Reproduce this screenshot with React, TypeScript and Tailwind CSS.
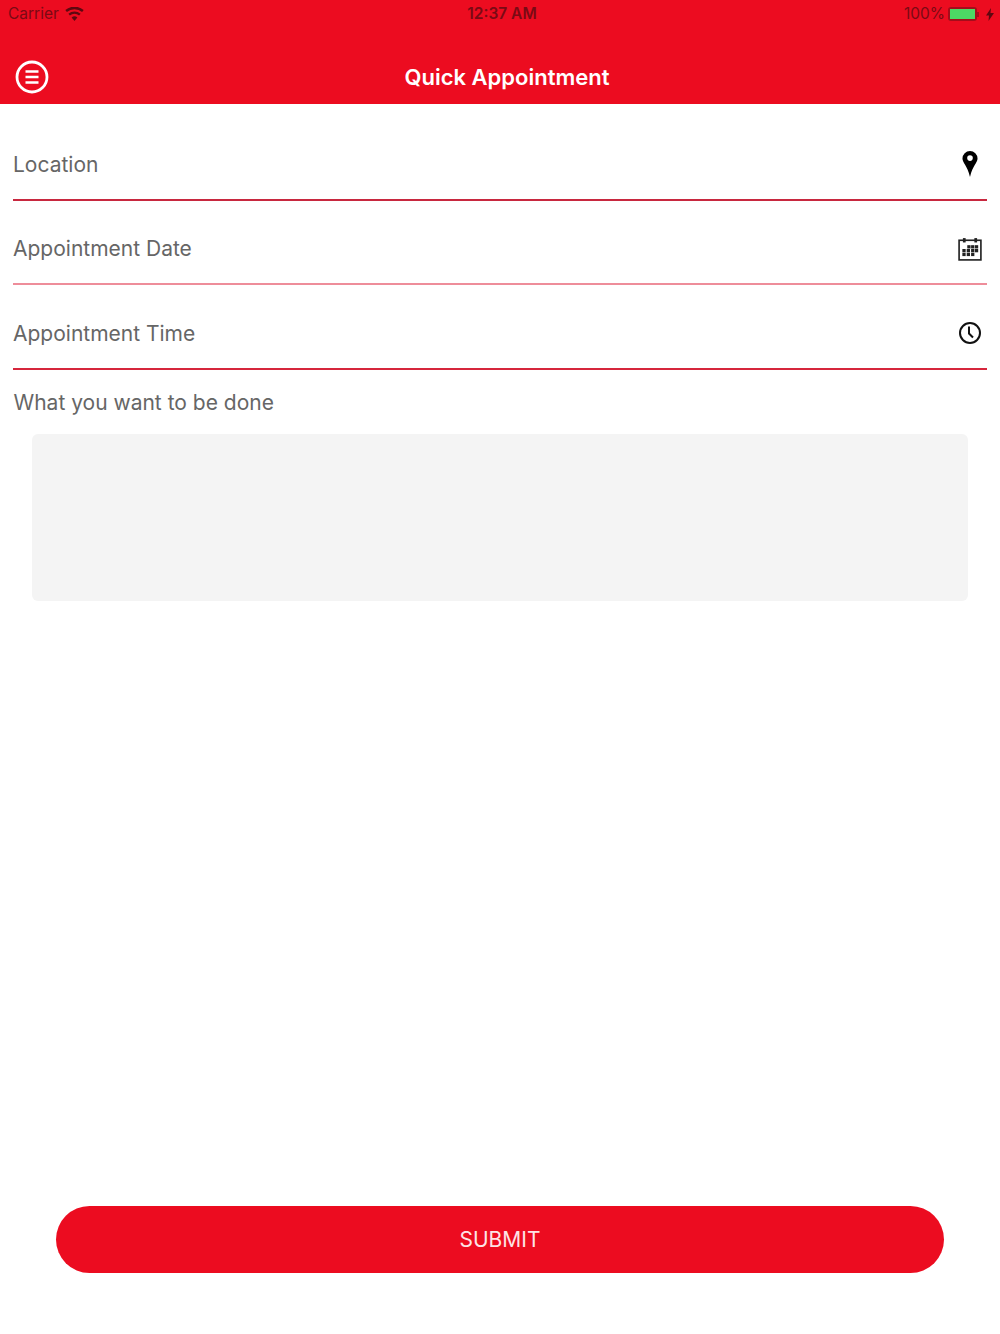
import React from 'react';

const fontStack = { fontFamily: 'Inter, "Liberation Sans", sans-serif' };

const PinIcon = () => (
  <svg width="18" height="28" viewBox="0 0 16 26">
    <path d="M8 1a7 7 0 0 0-7 7c0 4 4.500 6.500 7 17 2.500-10.500 7-13 7-17a7 7 0 0 0-7-7z" fill="#000" />
    <circle cx="8" cy="7.500" r="2.600" fill="#fff" />
  </svg>
);

const CalendarIcon = () => (
  <svg width="24" height="24" viewBox="0 0 22 22">
    <rect x="1" y="3" width="20" height="18" fill="none" stroke="#222" strokeWidth="1.500" />
    <rect x="4.500" y="1" width="2.500" height="4" fill="#222" />
    <rect x="15" y="1" width="2.500" height="4" fill="#222" />
    {[[8.500, 7.500], [12, 7.500], [15.500, 7.500], [4, 11], [8, 11], [12, 11], [15.500, 11], [4, 14.500], [8, 14.500], [12, 14.500]].map(([x, y]) => (
      <rect key={`${x}-${y}`} x={x} y={y} width="3" height="3" fill="#222" />
    ))}
  </svg>
);

const ClockIcon = () => (
  <svg width="24" height="24" viewBox="0 0 24 24" fill="none" stroke="#111" strokeWidth="2">
    <circle cx="12" cy="12" r="10" />
    <path d="M11 5.500v7l4 4" />
  </svg>
);

const Field = ({ label, icon, line }: { label: string; icon: React.ReactNode; line: string }) => (
  <div className={`mx-[13px] h-[84.500px] flex items-center justify-between border-b-2 pt-[14px] ${line}`}>
    <span className="text-[21px] text-[#666]">{label}</span>
    <span className="w-[34px] flex justify-center">{icon}</span>
  </div>
);

export default function App() {
  return (
    <div className="w-[1000px] h-[1334px] bg-white flex flex-col" style={fontStack}>
      <header className="h-[104px] bg-[#ec0c20] flex flex-col">
        <div className="h-[28px] pl-2 pr-[6px] grid grid-cols-3 items-center text-[15.500px] text-[#7a0a14]">
          <div className="flex items-center gap-[6px]">
            <span>Carrier</span>
            <svg width="19" height="14" viewBox="0 0 19 14" fill="#5e0810">
              <path d="M9.500 14 6.600 10.500a4.500 4.500 0 0 1 5.800 0z" />
              <path d="M4.900 8.500a7 7 0 0 1 9.200 0l1.500-1.800a9.500 9.500 0 0 0-12.200 0z" />
              <path d="M1.900 5a11.500 11.500 0 0 1 15.200 0l1.600-1.900a14 14 0 0 0-18.400 0z" />
            </svg>
          </div>
          <div className="text-center font-semibold pl-[2px]">12:37 AM</div>
          <div className="flex items-center justify-end">
            <span>100%</span>
            <span className="flex items-center ml-[3px]">
              <span className="w-[29px] h-[14px] border-2 border-[#a50d1b] rounded-[3px] flex">
                <span className="flex-1 bg-[#4cd964]" />
              </span>
              <span className="w-[2px] h-[5px] bg-[#a50d1b]" />
            </span>
            <svg className="ml-[7px]" width="8" height="13" viewBox="0 0 8 13" fill="#5e0810">
              <path d="M5 0 0 7.500h3L2.500 13 8 5H4.500z" />
            </svg>
          </div>
        </div>
        <div className="flex-1 relative flex items-center justify-center pl-[14px] pt-[22px]">
          <svg className="absolute left-[15px] top-[32px]" width="34" height="34" viewBox="0 0 34 34" fill="none" stroke="#fff">
            <circle cx="17" cy="17" r="15" strokeWidth="2.800" />
            <path d="M10.500 11.500h13M10.500 17h13M10.500 22.500h13" strokeWidth="2.400" />
          </svg>
          <h1 className="text-[22px] font-semibold text-white">Quick Appointment</h1>
        </div>
      </header>

      <div className="pt-[12px] flex flex-col">
        <Field label="Location" icon={<PinIcon />} line="border-[#c8283f]" />
        <Field label="Appointment Date" icon={<CalendarIcon />} line="border-[#ee8d9a]" />
        <Field label="Appointment Time" icon={<ClockIcon />} line="border-[#d6263c]" />
      </div>

      <label className="mx-[13.500px] mt-[19px] text-[21px] leading-[28px] text-[#666]">What you want to be done</label>
      <div className="mx-[32px] mt-[17px] h-[167px] bg-[#f4f4f4] rounded-[6px]" />

      <div className="mt-auto mb-[61px] mx-[56px]">
        <button className="w-full h-[67px] rounded-full bg-[#ec0c20] text-[21px] text-[#fde4e6]">SUBMIT</button>
      </div>
    </div>
  );
}
